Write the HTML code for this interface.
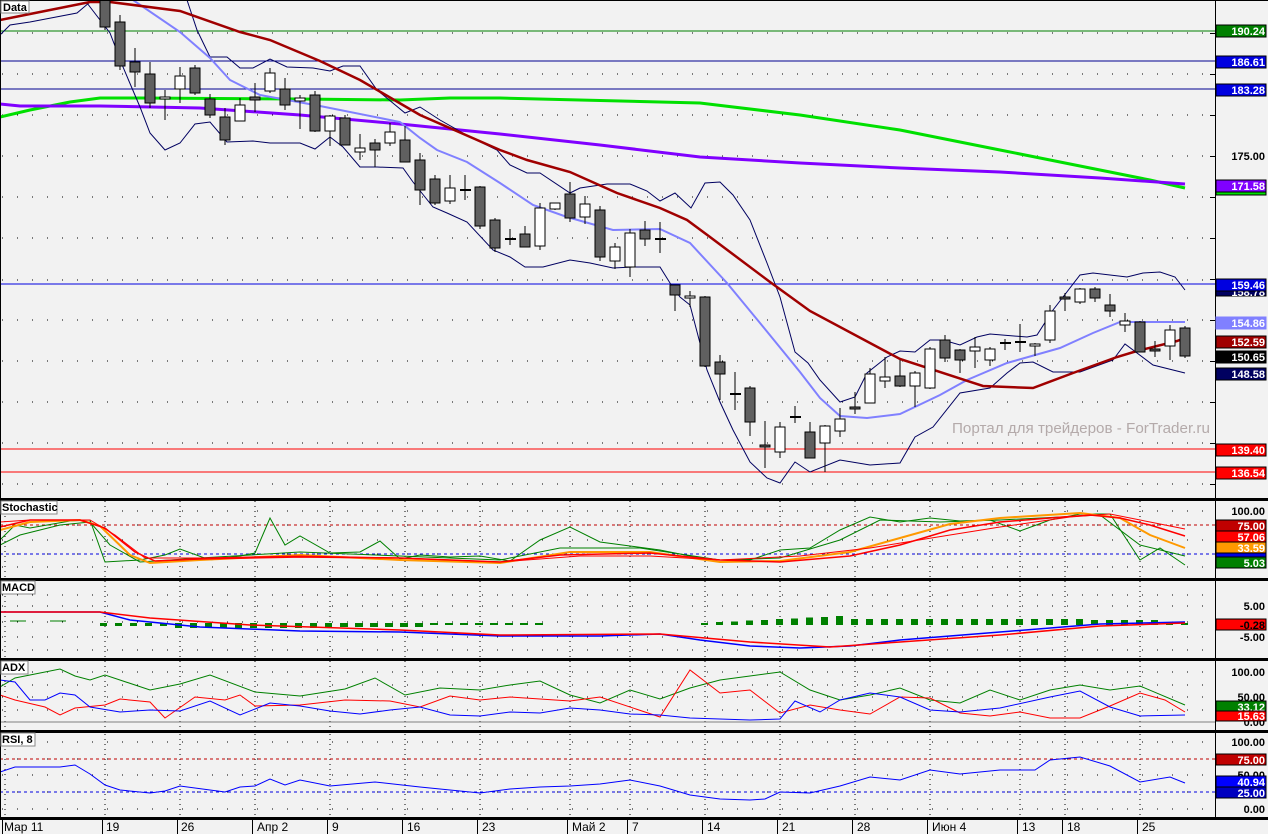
<!DOCTYPE html>
<html><head><meta charset="utf-8"><style>
html,body{margin:0;padding:0;background:#f2f2f2;width:1268px;height:834px;overflow:hidden}
svg{display:block}
text{font-family:"Liberation Sans","DejaVu Sans",sans-serif}
</style></head><body>
<svg id="s" width="1268" height="834" xmlns="http://www.w3.org/2000/svg" shape-rendering="crispEdges">
<rect width="1268" height="834" fill="#f2f2f2"/>
<g id="grid"></g>
<g id="main"></g>
<text x="952" y="433" font-size="15.2" fill="#b4aaaa" shape-rendering="auto">Портал для трейдеров - ForTrader.ru</text>
<g id="frame"></g>
<g id="labels" font-size="11" font-weight="bold" text-anchor="end">
<rect x="1216" y="25" width="50" height="12" fill="#008000" stroke="#000"/><text x="1265" y="35" fill="#fff">190.24</text>
<rect x="1216" y="56" width="50" height="12" fill="#0000e0" stroke="#000"/><text x="1265" y="66" fill="#fff">186.61</text>
<rect x="1216" y="84" width="50" height="12" fill="#0000e0" stroke="#000"/><text x="1265" y="94" fill="#fff">183.28</text>
<text x="1265" y="160" fill="#000">175.00</text>
<rect x="1216" y="187" width="50" height="8" fill="#00e000" stroke="#000"/>
<rect x="1216" y="180" width="50" height="12" fill="#8000ff" stroke="#000"/><text x="1265" y="190" fill="#fff">171.58</text>
<rect x="1216" y="286" width="50" height="10" fill="#000060" stroke="#000"/><text x="1265" y="296" fill="#fff">158.78</text>
<rect x="1216" y="279" width="50" height="12" fill="#0000e0" stroke="#000"/><text x="1265" y="289" fill="#fff">159.46</text>
<rect x="1216" y="317" width="50" height="12" fill="#8080ff" stroke="#8080ff"/><text x="1265" y="327" fill="#fff">154.86</text>
<rect x="1216" y="336" width="50" height="12" fill="#a00000" stroke="#000"/><text x="1265" y="346" fill="#fff">152.59</text>
<rect x="1216" y="351" width="50" height="12" fill="#000" stroke="#000"/><text x="1265" y="361" fill="#fff">150.65</text>
<rect x="1216" y="368" width="50" height="12" fill="#000060" stroke="#000"/><text x="1265" y="378" fill="#fff">148.58</text>
<rect x="1216" y="444" width="50" height="12" fill="#ff0000" stroke="#000"/><text x="1265" y="454" fill="#fff">139.40</text>
<rect x="1216" y="467" width="50" height="12" fill="#ff0000" stroke="#000"/><text x="1265" y="477" fill="#fff">136.54</text>

<text x="1265" y="515" fill="#000">100.00</text>
<rect x="1216" y="554" width="50" height="14" fill="#008000" stroke="#000"/><text x="1265" y="567" fill="#fff">5.03</text>
<rect x="1216" y="549" width="50" height="8" fill="#0000e0" stroke="#000"/>
<rect x="1216" y="542" width="50" height="11" fill="#ff9900" stroke="#000"/><text x="1265" y="552" fill="#fff">33.59</text>
<rect x="1216" y="531" width="50" height="11" fill="#ff0000" stroke="#000"/><text x="1265" y="541" fill="#fff">57.06</text>
<rect x="1216" y="520" width="50" height="11" fill="#c00000" stroke="#000"/><text x="1265" y="530" fill="#fff">75.00</text>

<text x="1265" y="610" fill="#000">5.00</text>
<rect x="1216" y="619" width="50" height="11" fill="#ff0000" stroke="#000"/><text x="1265" y="629" fill="#000">-0.28</text>
<text x="1265" y="641" fill="#000">-5.00</text>

<text x="1265" y="676" fill="#000">100.00</text>
<text x="1265" y="701" fill="#000">50.00</text>
<text x="1265" y="726" fill="#000">0.00</text>
<rect x="1216" y="701" width="50" height="11" fill="#008000" stroke="#000"/><text x="1265" y="711" fill="#fff">33.12</text>
<rect x="1216" y="711" width="50" height="10" fill="#ff0000" stroke="#000"/><text x="1265" y="720" fill="#fff">15.63</text>

<text x="1265" y="746" fill="#000">100.00</text>
<rect x="1216" y="754" width="50" height="11" fill="#c00000" stroke="#000"/><text x="1265" y="764" fill="#fff">75.00</text>
<text x="1265" y="779" fill="#000">50.00</text>
<rect x="1216" y="776" width="50" height="11" fill="#0000ff" stroke="#000"/><text x="1265" y="786" fill="#fff">40.94</text>
<rect x="1216" y="787" width="50" height="11" fill="#0000c0" stroke="#000"/><text x="1265" y="797" fill="#fff">25.00</text>
<text x="1265" y="813" fill="#000">0.00</text>
</g>
<g font-size="12" fill="#000">
<text x="4" y="831">Мар 11</text><text x="106" y="831">19</text><text x="181" y="831">26</text><text x="257" y="831">Апр 2</text><text x="332" y="831">9</text><text x="407" y="831">16</text><text x="482" y="831">23</text><text x="572" y="831">Май 2</text><text x="632" y="831">7</text><text x="707" y="831">14</text><text x="782" y="831">21</text><text x="857" y="831">28</text><text x="932" y="831">Июн 4</text><text x="1022" y="831">13</text><text x="1067" y="831">18</text><text x="1142" y="831">25</text>
</g>
<g font-size="11" font-weight="bold">
<rect x="1" y="1" width="28" height="12" fill="#fff" stroke="#888"/><text x="3" y="11">Data</text>
<rect x="1" y="501" width="56" height="13" fill="#fff" stroke="#888"/><text x="2" y="511">Stochastic</text>
<rect x="1" y="581" width="34" height="13" fill="#fff" stroke="#888"/><text x="2" y="591">MACD</text>
<rect x="1" y="661" width="27" height="13" fill="#fff" stroke="#888"/><text x="2" y="671">ADX</text>
<rect x="1" y="733" width="34" height="13" fill="#fff" stroke="#888"/><text x="2" y="743">RSI, 8</text>
</g>
</svg>
<script>
var NS="http://www.w3.org/2000/svg";
function el(p,t,a){var e=document.createElementNS(NS,t);for(var k in a)e.setAttribute(k,a[k]);document.getElementById(p).appendChild(e);return e;}
function pl(p,pts,c,w,extra){var a={points:pts.map(function(q){return q.join(',')}).join(' '),fill:'none',stroke:c,'stroke-width':w,'shape-rendering':'auto'};for(var k in extra)a[k]=extra[k];return el(p,'polyline',a);}
function hl(p,y,c,w,d,x1,x2){var a={x1:x1||0,x2:x2||1215,y1:y,y2:y,stroke:c,'stroke-width':w||1};if(d)a['stroke-dasharray']=d;el(p,'line',a);}
var vx=[5,105,180,255,330,405,480,570,630,705,780,855,930,1020,1065,1140];
var panels=[[501,577],[581,657],[661,729],[734,816]];
panels.forEach(function(pn){vx.forEach(function(x){el('grid','line',{x1:x,x2:x,y1:pn[0],y2:pn[1],stroke:'#000','stroke-dasharray':'1 4'});});});
[33,74,115,156,197,238,280,320,361,402,443,484].forEach(function(y){hl('grid',y,'#000',1,'1 14',2,1215);});
[511,525,540,554,567,595,606,622,637,650,672,685,697,710,742,759,775,792,809].forEach(function(y){hl('grid',y,'#000',1,'1 14',2,1215);});
hl('main',31,'#008000');hl('main',61,'#000090');hl('main',89,'#000090');hl('main',284,'#0000e0');hl('main',449,'#ff0000');hl('main',472,'#ff0000');
pl('main',[[0,117],[30,110],[70,102],[100,98],[140,98],[300,99],[400,100],[450,98],[500,98],[700,103],[800,115],[900,130],[1000,150],[1100,170],[1150,180],[1185,188]],'#00e000',3);
pl('main',[[0,104],[20,106],[100,106],[200,108],[300,115],[400,124],[500,134],[600,145],[700,157],[800,163],[900,168],[1000,172],[1100,178],[1185,184]],'#8000ff',3);
pl('main',[[0,35],[10,25],[30,22],[77,13],[90,2],[100,-5]],'#000060',1);
pl('main',[[180,-5],[187,0],[197,30],[210,57],[227,57],[240,68],[253,68],[270,59],[287,67],[313,68],[330,71],[343,66],[360,66],[377,90],[405,113],[420,107],[440,120],[470,137],[497,150],[510,165],[527,173],[540,173],[570,193],[580,188],[607,184],[630,184],[647,191],[660,201],[675,193],[691,208],[705,183],[720,182],[733,195],[750,220],[767,263],[780,297],[795,352],[808,363],[820,380],[840,402],[855,397],[867,373],[887,357],[900,351],[915,352],[930,340],[943,340],[960,345],[977,337],[990,334],[1027,337],[1037,335],[1053,310],[1080,275],[1093,273],[1127,277],[1143,273],[1160,272],[1175,277],[1185,290]],'#000060',1);
pl('main',[[87,3],[110,33],[123,67],[140,107],[150,133],[165,150],[180,143],[195,124],[210,122],[227,142],[253,141],[270,143],[300,143],[315,149],[330,137],[343,147],[360,167],[377,167],[403,168],[413,182],[433,207],[447,213],[467,222],[493,250],[510,257],[525,267],[543,267],[570,260],[590,263],[613,268],[633,267],[660,267],[670,283],[680,297],[690,305],[707,370],[720,402],[733,430],[750,462],[767,478],[780,483],[795,462],[810,472],[840,460],[870,465],[900,463],[915,437],[933,427],[960,393],[990,388],[1007,373],[1020,363],[1033,362],[1053,372],[1080,372],[1113,360],[1125,344],[1153,365],[1185,373]],'#000060',1);
pl('main',[[0,5],[10,0]],'#8080ff',2);
pl('main',[[133,0],[180,32],[210,58],[230,80],[260,95],[320,106],[400,122],[420,138],[437,150],[467,162],[500,183],[533,205],[567,217],[613,230],[660,229],[690,243],[727,283],[760,323],[800,372],[820,398],[840,416],[867,418],[900,414],[940,395],[967,380],[1007,363],[1060,348],[1093,333],[1120,322],[1185,322]],'#8080ff',2);
pl('main',[[0,20],[20,16],[90,2],[110,2],[180,11],[240,32],[270,40],[320,61],[360,80],[420,115],[500,150],[527,160],[570,172],[617,193],[660,208],[687,220],[710,237],[770,282],[810,311],[900,359],[983,386],[1033,388],[1073,373],[1117,357],[1137,351],[1177,341],[1185,338]],'#a00000',2.5);
var C=[[105,-2,27,-2,30,1],[120,22,66,15,70,1],[135,62,72,48,87,1],[150,74,103,62,108,1],[165,97,99,90,120,0],[180,76,89,67,103,0],[195,68,93,65,95,1],[210,99,115,94,118,1],[225,117,140,108,145,1],[240,105,121,98,121,0],[255,97,100,83,112,1],[270,73,91,68,93,0],[285,89,105,78,110,1],[300,98,101,95,129,0],[315,95,131,91,132,1],[330,116,131,115,146,0],[345,118,145,115,145,1],[360,148,152,134,160,0],[375,143,150,139,167,1],[390,132,143,123,146,0],[405,140,162,126,162,1],[420,160,190,153,205,1],[435,179,203,175,205,1],[450,188,201,175,204,0],[465,190,190,175,200,2],[480,187,226,186,229,1],[495,220,248,218,252,1],[510,239,239,229,245,2],[525,234,247,226,247,1],[540,208,246,203,250,0],[555,203,209,203,210,0],[570,194,218,182,222,1],[585,204,217,196,224,0],[600,210,257,206,261,1],[615,247,261,243,269,0],[630,233,267,229,277,0],[645,230,239,221,246,1],[660,239,239,222,253,2],[675,285,295,285,311,1],[690,296,298,291,307,0],[705,297,366,296,367,1],[720,362,374,355,400,1],[735,394,394,372,410,2],[750,388,422,386,436,1],[765,445,447,421,468,1],[780,427,452,422,458,0],[795,417,417,406,423,2],[810,432,458,422,458,1],[825,426,443,425,472,0],[840,419,431,408,437,0],[855,407,409,392,414,1],[870,374,403,368,403,0],[885,377,381,357,388,0],[900,376,386,360,387,1],[915,373,386,371,407,0],[930,349,388,347,389,0],[945,340,358,335,362,1],[960,350,360,349,373,1],[975,347,351,337,368,0],[990,349,360,347,366,0],[1005,343,343,339,350,2],[1020,342,342,324,352,2],[1035,344,346,343,356,0],[1050,311,340,305,343,0],[1065,297,298,293,311,1],[1080,289,302,288,304,0],[1095,289,298,287,302,1],[1110,305,311,294,317,1],[1125,321,325,313,332,0],[1140,322,352,321,352,1],[1155,349,350,341,357,1],[1170,330,346,325,360,0],[1185,328,356,326,358,1]];
C.forEach(function(c){var x=c[0];el('main','line',{x1:x,x2:x,y1:c[3],y2:c[4],stroke:'#000'});
if(c[5]==2){el('main','rect',{x:x-5,y:c[1]-1,width:11,height:2,fill:'#000'});}
else el('main','rect',{x:x-5,y:c[1],width:10,height:Math.max(2,c[2]-c[1]),fill:c[5]?'#606060':'#fff',stroke:'#000'});});
hl('main',525,'#c00000',1,'3 3');hl('main',554,'#0000e0',1,'3 3');
pl('main',[[0,540],[15,525],[30,528],[70,521],[90,520],[105,562],[140,560],[165,555],[180,549],[210,560],[240,556],[255,553],[270,518],[285,545],[300,536],[330,553],[360,552],[380,541],[400,559],[420,555],[450,557],[480,556],[510,561],[540,540],[570,527],[600,542],[630,546],[660,550],[690,556],[720,560],[750,560],[780,550],[810,548],[840,530],[870,517],[900,522],[930,518],[960,521],[990,520],[1020,531],[1050,520],[1080,514],[1110,514],[1140,560],[1160,548],[1185,565]],'#008000',1);
pl('main',[[0,545],[20,535],[60,525],[90,522],[110,545],[140,562],[200,558],[300,552],[400,556],[500,560],[560,548],[640,548],[720,560],[780,558],[840,540],[880,520],[940,522],[1000,520],[1060,517],[1100,515],[1140,545],[1185,556]],'#008000',1);
pl('main',[[0,530],[30,522],[80,520],[100,526],[130,555],[150,563],[200,560],[300,555],[400,560],[500,563],[570,552],[650,552],[720,562],[780,561],[850,552],[900,538],[950,524],[1000,518],[1080,513],[1120,518],[1150,535],[1185,548]],'#ff9900',2);
pl('main',[[0,527],[30,520],[80,520],[105,528],[135,552],[155,561],[200,559],[300,557],[400,558],[500,562],[560,555],[650,553],[720,560],[780,562],[850,556],[900,545],[950,530],[1000,522],[1050,518],[1090,515],[1120,518],[1150,525],[1185,536]],'#ff0000',1.5);
pl('main',[[0,522],[30,520],[90,520],[115,535],[145,558],[200,558],[300,556],[400,558],[500,562],[580,556],[650,556],[720,560],[800,556],[870,548],[950,535],[1000,527],[1070,517],[1110,514],[1150,522],[1185,529]],'#ff0000',1);
hl('main',621,'#008000',1,'16 24',10,90);
for(var x=100;x<=640;x+=15){var h=x<170?3:(x<340?5:(x<420?4:2));if(x>540&&x<700)continue;el('main','rect',{x:x,y:623,width:x<340?7:8,height:h,fill:'#008000'});}
for(var x=705;x<=1190;x+=15){var d=x<850?(x-700)/20+2:(x<1090?6:5);if(x>1160)d=2;el('main','rect',{x:x-4,y:625-d,width:7,height:d,fill:'#008000'});}
pl('main',[[0,612],[100,612],[130,620],[200,627],[300,631],[400,632],[500,636],[600,636],[660,634],[700,640],[750,646],[800,648],[850,646],[900,640],[1000,632],[1100,624],[1185,622]],'#0000ff',1.5);
pl('main',[[0,612],[100,612],[150,618],[250,625],[400,630],[500,635],[660,634],[750,642],[830,647],[900,642],[1000,635],[1100,626],[1185,623]],'#ff0000',1.5);
hl('main',722,'#808080',1);
pl('main',[[0,687],[15,678],[30,675],[60,669],[75,676],[90,680],[105,675],[150,690],[180,684],[210,675],[255,692],[300,696],[345,689],[375,678],[405,695],[440,688],[480,690],[510,685],[540,681],[570,695],[600,703],[630,690],[660,699],[690,688],[720,680],[780,672],[810,690],[840,700],[870,695],[900,688],[930,700],[960,703],[990,690],[1020,700],[1050,690],[1080,685],[1110,690],[1140,686],[1185,705]],'#008000',1);
pl('main',[[0,695],[15,700],[45,707],[60,715],[75,708],[105,705],[120,699],[150,702],[165,718],[195,697],[225,700],[240,695],[255,706],[300,705],[345,700],[390,701],[420,707],[450,696],[480,700],[510,697],[540,699],[570,701],[600,697],[660,717],[690,670],[720,693],[750,690],[780,713],[810,705],[840,710],[870,714],[900,697],[930,698],[960,713],[990,716],[1020,712],[1050,718],[1080,718],[1110,706],[1140,693],[1165,700],[1185,712]],'#ff0000',1);
pl('main',[[0,680],[15,682],[30,700],[45,700],[60,693],[75,695],[90,707],[120,712],[150,710],[180,711],[210,701],[240,715],[270,703],[300,706],[330,711],[360,714],[390,710],[420,707],[450,715],[480,716],[510,712],[540,713],[570,708],[600,710],[630,714],[660,715],[690,718],[720,719],[750,720],[780,719],[795,701],[820,712],[840,700],[870,693],[900,697],[930,710],[960,712],[1000,708],[1050,697],[1080,691],[1110,707],[1140,716],[1185,715]],'#0000ff',1);
hl('main',759,'#c00000',1,'3 3');hl('main',792,'#0000e0',1,'3 3');
pl('main',[[0,772],[15,767],[60,767],[75,765],[90,774],[105,785],[120,790],[150,793],[165,791],[180,786],[210,790],[225,792],[240,787],[255,786],[270,779],[285,785],[300,780],[330,786],[375,782],[420,787],[480,793],[510,789],[540,787],[570,786],[600,784],[630,780],[660,786],[690,795],[720,799],[750,800],[765,799],[780,792],[810,793],[840,786],[870,777],[900,780],[930,770],[960,774],[1000,770],[1035,770],[1050,760],[1080,757],[1110,766],[1140,782],[1170,777],[1185,783]],'#0000ff',1);
[499,579,659,731,818].forEach(function(y){el('frame','rect',{x:0,y:y-1,width:1268,height:3,fill:'#000'});});
el('frame','rect',{x:1215,y:0,width:1,height:818,fill:'#000'});
el('frame','rect',{x:0,y:0,width:1,height:818,fill:'#000'});
el('frame','rect',{x:0,y:0,width:1268,height:1,fill:'#000'});
for(var y=33;y<498;y+=41)el('frame','rect',{x:1210,y:y,width:5,height:1,fill:'#000'});
vx.forEach(function(x){el('frame','rect',{x:x-3,y:819,width:1,height:15,fill:'#000'});});
</script>
</body></html>
